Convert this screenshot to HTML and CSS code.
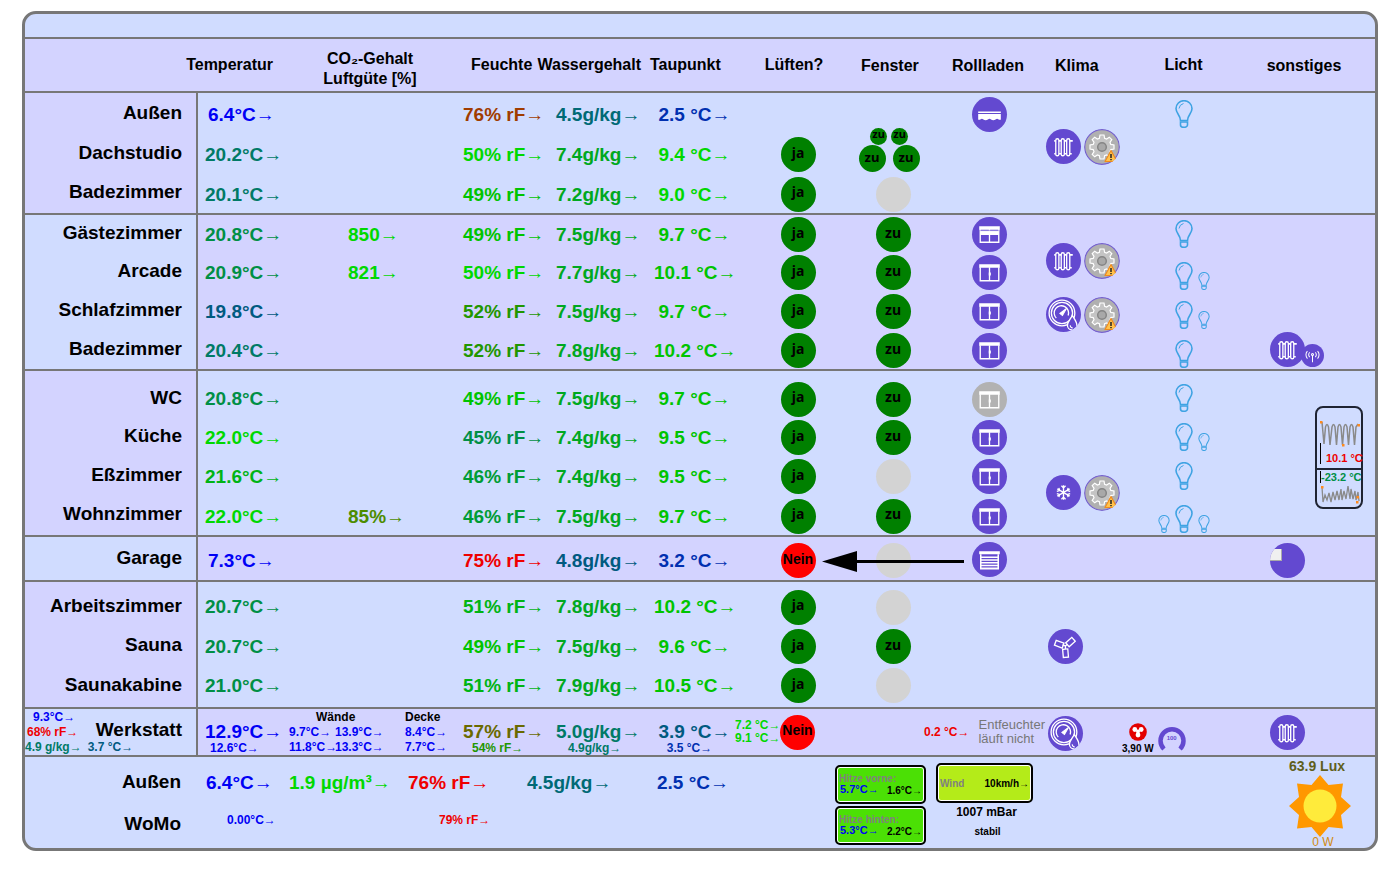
FILE: index.html
```html
<!DOCTYPE html>
<html lang="de">
<head>
<meta charset="utf-8">
<meta name="viewport" content="width=device-width, initial-scale=1">
<title>Raumklima</title>
<link rel="stylesheet" href="styles.css">
</head>
<body>
<svg class="defs" aria-hidden="true">
  <symbol id="bulb" viewBox="0 0 18 28">
    <g fill="none" stroke="#3fa3e3" stroke-width="1.600">
      <path d="M5.500 20.500C5.500 15 1 13.500 1 8.500a8 7.800 0 0 1 16 0c0 5-4.500 6.500-4.500 12z"/>
      <path d="M5.500 22h7v3a3.500 2.300 0 0 1-7 0z"/>
      <path d="M4 8.500q.5-4 4.500-5" stroke-width="1"/>
    </g>
  </symbol>
  <symbol id="window" viewBox="0 0 34 34">
    <path d="M7 9h20v3.500H7z" fill="#fff"/>
    <path d="M8 12v13h18V12M17 12v13" fill="none" stroke="#fff" stroke-width="1.300"/>
    <path d="M17.300 17v3" stroke="#fff" stroke-width="2"/>
  </symbol>
  <symbol id="window-half" viewBox="0 0 34 34">
    <path d="M7 9h20v3.500H7zM8 13.500h18v4H8z" fill="#fff"/>
    <path d="M8 12v12.500h18V12M17 12v12.500" fill="none" stroke="#fff" stroke-width="1.300"/>
    <path d="M8 13.200h18" stroke="#9b8de2" stroke-width=".8"/>
  </symbol>
  <symbol id="awning" viewBox="0 0 34 34">
    <path d="M6 14h22v1.500H6z" fill="#fff"/>
    <path d="M6 16.500h22v5.500c-2 .6-2.600-.9-3.600-.9s-1.800 1.400-3.700 1.400-2.600-1.400-3.700-1.400-1.800 1.400-3.700 1.400-2.700-1.400-3.700-1.400S8 22.600 6 22z" fill="#fff"/>
  </symbol>
  <symbol id="garage" viewBox="0 0 34 34">
    <path d="M7 9h20v3H7z" fill="#fff"/>
    <path d="M8.500 12v14h17V12M8 14.800h18M8 17.500h18M8 20.200h18M8 22.900h18M8 25.500h18" fill="none" stroke="#fff" stroke-width="1.500"/>
  </symbol>
  <symbol id="radiator" viewBox="0 0 34 34">
    <path d="M8 11.500h18M8 24h17" stroke="#fff" stroke-width="1.600"/>
    <g fill="#6349d0" stroke="#fff" stroke-width="1.300"><rect x="9.500" y="9.500" width="3" height="16.500" rx="1.500"/><rect x="14.800" y="9.500" width="3" height="16.500" rx="1.500"/><rect x="20.100" y="9.500" width="3" height="16.500" rx="1.500"/></g>
  </symbol>
  <symbol id="gear" viewBox="0 0 36 36">
    <circle cx="18" cy="18" r="17.300" fill="#b0b0b0" stroke="#7763cf" stroke-width="1.200"/>
    <path d="M16 6h4l.6 3.200 2 .8 2.700-1.800 2.500 2.500-1.800 2.700.8 2 3.200.6v4l-3.200.6-.8 2 1.800 2.700-2.500 2.500-2.700-1.800-2 .8-.6 3.200h-4l-.6-3.200-2-.8-2.700 1.800-2.500-2.500L10 22.600l-.8-2L6 20v-4l3.200-.6.8-2-1.800-2.700 2.500-2.500 2.700 1.800 2-.8z" fill="#c4c4c4" stroke="#fff" stroke-width="1.200"/>
    <circle cx="18" cy="18" r="4.300" fill="#a8a8a8" stroke="#858585" stroke-width="1.500"/>
    <path d="M27 21.500l6 11H21z" fill="#ffc34d" stroke="#f08b1d" stroke-width="1.200" stroke-linejoin="round"/>
    <path d="M27 25v4M27 30v1.300" stroke="#222" stroke-width="1.500"/>
  </symbol>
  <symbol id="humidity" viewBox="0 0 34 34">
    <g fill="none" stroke="#fff" stroke-width="1.300">
      <circle cx="15.500" cy="15.500" r="12.500"/><circle cx="15.500" cy="15.500" r="10.300"/>
      <path d="M10 20.500a7 7 0 1 1 11.500-2.500"/>
    </g>
    <path d="M13.500 16l6.500-5-4 7z" fill="#fff" stroke="#fff"/>
    <path d="M25.500 18c2.500 4 4.500 6.500 4.500 9.500a4.600 4.500 0 0 1-9.200 0c0-3 2.700-5.500 4.700-9.500z" fill="#6349d0" stroke="#fff" stroke-width="1.300"/>
    <path d="M23.500 27.500q0 2.500 2.500 2.700" fill="none" stroke="#fff"/>
  </symbol>
  <symbol id="snow" viewBox="0 0 34 34">
    <g stroke="#fff" stroke-width="1.300" fill="none">
      <path d="M17 10v14M11 13.500l12 7M23 13.500l-12 7"/>
      <path d="M15 10.500l2 2 2-2M15 23.500l2-2 2 2M10.500 16l2.700-.8-.7-2.700M23.500 18l-2.700.8.7 2.700M23.500 16l-2.700-.8.7-2.700M10.500 18l2.700.8-.7 2.700"/>
    </g>
  </symbol>
  <symbol id="fan" viewBox="0 0 34 34">
    <g fill="none" stroke="#fff" stroke-width="1.300">
      <rect x="14.500" y="19.500" width="5" height="8" transform="rotate(-5 17 23)"/>
      <rect x="14.500" y="19.500" width="5" height="8" transform="rotate(110 17 17)"/>
      <rect x="14.500" y="19.500" width="5" height="8" transform="rotate(-132 17 17)"/>
      <path d="M17 16.500v3M14 15.500l3 1 2-2"/>
    </g>
  </symbol>
  <symbol id="antenna" viewBox="0 0 34 34">
    <g fill="none" stroke="#fff" stroke-width="1.500">
      <path d="M17 16v11M13 12.500a4.500 4.500 0 0 0 0 7M21 12.500a4.500 4.500 0 0 1 0 7M9.500 10.500a8 8 0 0 0 0 11M24.500 10.500a8 8 0 0 1 0 11"/><circle cx="17" cy="15.500" r="1.500"/>
    </g>
  </symbol>
</svg>

<main class="panel">
  <div class="strip"></div>
  <table class="rooms">
    <colgroup>
      <col class="w-name"><col class="w-temp"><col class="w-air"><col class="w-hum"><col class="w-water"><col class="w-dew">
      <col class="w-vent"><col class="w-win"><col class="w-blind"><col class="w-clima"><col class="w-light"><col class="w-misc">
    </colgroup>
    <thead>
      <tr>
        <td></td>
        <th class="h-temp" scope="col">Temperatur</th>
        <th class="h-air" scope="col">CO₂-Gehalt<br>Luftgüte [%]</th>
        <th class="h-hum" scope="col">Feuchte</th>
        <th scope="col" class="h-water">Wassergehalt</th>
        <th scope="col" class="h-dew">Taupunkt</th>
        <th scope="col" class="h-vent">Lüften?</th>
        <th scope="col" class="low h-win">Fenster</th>
        <th scope="col" class="low h-blind">Rollladen</th>
        <th scope="col" class="low h-clima">Klima</th>
        <th scope="col">Licht</th>
        <th scope="col" class="low h-misc">sonstiges</th>
      </tr>
    </thead>

    <tbody class="zone sky g1">
      <tr class="first">
        <th scope="row">Außen</th>
        <td class="temp short blue">6.4°C<i>→</i></td><td></td>
        <td class="brown">76% rF<i>→</i></td><td class="water petrol">4.5g/kg<i>→</i></td><td class="dew navy">2.5 °C<i>→</i></td>
        <td></td><td></td>
        <td class="blind"><button class="ico" aria-label="Markise"><svg><use href="#awning"/></svg></button></td>
        <td class="clima" rowspan="3"><div class="stack">
          <div class="pair"><button class="ico" aria-label="Heizung Dachstudio"><svg><use href="#radiator"/></svg></button><button class="ico gear" aria-label="Einstellungen Dachstudio"><svg><use href="#gear"/></svg></button></div>
        </div></td>
        <td class="light"><div class="bulbs"><button class="bulb" aria-label="Licht Außen"><svg><use href="#bulb"/></svg></button></div></td>
        <td></td>
      </tr>
      <tr>
        <th scope="row">Dachstudio</th>
        <td class="temp teal">20.2°C<i>→</i></td><td></td>
        <td class="lime">50% rF<i>→</i></td><td class="water leaf">7.4g/kg<i>→</i></td><td class="dew lime">9.4 °C<i>→</i></td>
        <td class="mid"><span class="dot ok">ja</span></td>
        <td class="mid"><div class="quad"><div><span class="dot ok tiny">zu</span><span class="dot ok tiny">zu</span></div><div><span class="dot ok small">zu</span><span class="dot ok small">zu</span></div></div></td>
        <td></td><td></td><td></td>
      </tr>
      <tr>
        <th scope="row">Badezimmer</th>
        <td class="temp teal">20.1°C<i>→</i></td><td></td>
        <td class="green">49% rF<i>→</i></td><td class="water leaf">7.2g/kg<i>→</i></td><td class="dew lime">9.0 °C<i>→</i></td>
        <td class="mid"><span class="dot ok">ja</span></td><td class="win"><span class="dot none"></span></td>
        <td></td><td></td><td></td>
      </tr>
    </tbody>

    <tbody class="zone lilac g2">
      <tr class="first">
        <th scope="row">Gästezimmer</th>
        <td class="temp sea">20.8°C<i>→</i></td><td class="air lime">850<i>→</i></td>
        <td class="green">49% rF<i>→</i></td><td class="water leaf">7.5g/kg<i>→</i></td><td class="dew green">9.7 °C<i>→</i></td>
        <td class="mid"><span class="dot ok">ja</span></td><td class="win"><span class="dot ok">zu</span></td>
        <td class="blind"><button class="ico" aria-label="Rollladen Gästezimmer"><svg><use href="#window-half"/></svg></button></td>
        <td class="clima" rowspan="4"><div class="stack">
          <div class="pair"><button class="ico" aria-label="Heizung Arcade"><svg><use href="#radiator"/></svg></button><button class="ico gear" aria-label="Einstellungen Arcade"><svg><use href="#gear"/></svg></button></div>
          <div class="pair"><button class="ico" aria-label="Klima Schlafzimmer"><svg><use href="#humidity"/></svg></button><button class="ico gear" aria-label="Einstellungen Schlafzimmer"><svg><use href="#gear"/></svg></button></div>
        </div></td>
        <td class="light"><div class="bulbs"><button class="bulb" aria-label="Licht Gästezimmer"><svg><use href="#bulb"/></svg></button></div></td>
        <td></td>
      </tr>
      <tr>
        <th scope="row">Arcade</th>
        <td class="temp sea">20.9°C<i>→</i></td><td class="air lime">821<i>→</i></td>
        <td class="lime">50% rF<i>→</i></td><td class="water leaf">7.7g/kg<i>→</i></td><td class="dew green">10.1 °C<i>→</i></td>
        <td class="mid"><span class="dot ok">ja</span></td><td class="win"><span class="dot ok">zu</span></td>
        <td class="blind"><button class="ico" aria-label="Rollladen Arcade"><svg><use href="#window"/></svg></button></td>
        <td class="light drop"><div class="bulbs"><button class="bulb" aria-label="Licht Arcade"><svg><use href="#bulb"/></svg></button><button class="bulb mini right" aria-label="Nebenlicht Arcade"><svg><use href="#bulb"/></svg></button></div></td>
        <td></td>
      </tr>
      <tr>
        <th scope="row">Schlafzimmer</th>
        <td class="temp steel">19.8°C<i>→</i></td><td></td>
        <td class="moss">52% rF<i>→</i></td><td class="water leaf">7.5g/kg<i>→</i></td><td class="dew green">9.7 °C<i>→</i></td>
        <td class="mid"><span class="dot ok">ja</span></td><td class="win"><span class="dot ok">zu</span></td>
        <td class="blind"><button class="ico" aria-label="Rollladen Schlafzimmer"><svg><use href="#window"/></svg></button></td>
        <td class="light drop"><div class="bulbs"><button class="bulb" aria-label="Licht Schlafzimmer"><svg><use href="#bulb"/></svg></button><button class="bulb mini right" aria-label="Nebenlicht Schlafzimmer"><svg><use href="#bulb"/></svg></button></div></td>
        <td></td>
      </tr>
      <tr>
        <th scope="row">Badezimmer</th>
        <td class="temp teal">20.4°C<i>→</i></td><td></td>
        <td class="moss">52% rF<i>→</i></td><td class="water leaf">7.8g/kg<i>→</i></td><td class="dew green">10.2 °C<i>→</i></td>
        <td class="mid"><span class="dot ok">ja</span></td><td class="win"><span class="dot ok">zu</span></td>
        <td class="blind"><button class="ico" aria-label="Rollladen Badezimmer"><svg><use href="#window"/></svg></button></td>
        <td class="light drop"><div class="bulbs"><button class="bulb" aria-label="Licht Badezimmer"><svg><use href="#bulb"/></svg></button></div></td>
        <td class="misc"><div class="linked"><button class="ico" aria-label="Handtuchheizung"><svg><use href="#radiator"/></svg></button><button class="ico sub" aria-label="Funk"><svg><use href="#antenna"/></svg></button></div></td>
      </tr>
    </tbody>

    <tbody class="zone sky g3">
      <tr class="first">
        <th scope="row">WC</th>
        <td class="temp sea">20.8°C<i>→</i></td><td></td>
        <td class="green">49% rF<i>→</i></td><td class="water leaf">7.5g/kg<i>→</i></td><td class="dew green">9.7 °C<i>→</i></td>
        <td class="mid"><span class="dot ok">ja</span></td><td class="win"><span class="dot ok">zu</span></td>
        <td class="blind"><button class="ico off" aria-label="Rollladen WC"><svg><use href="#window"/></svg></button></td>
        <td class="clima" rowspan="4"><div class="stack">
          <div class="pair"><button class="ico" aria-label="Kühlung Wohnzimmer"><svg><use href="#snow"/></svg></button><button class="ico gear" aria-label="Einstellungen Wohnzimmer"><svg><use href="#gear"/></svg></button></div>
        </div></td>
        <td class="light"><div class="bulbs"><button class="bulb" aria-label="Licht WC"><svg><use href="#bulb"/></svg></button></div></td>
        <td class="history" rowspan="4">
          <div class="fridge">
            <div class="half red">
              <svg class="spark" viewBox="0 0 40 26"><path d="M2 1l2 22L5.500 6q1.500-5 3 0l1.500 18L12 6q1.500-5 3 0l1.500 18L18 6q1.500-5 3 0l1.500 18L24 6q1.500-5 3 0l1.500 18L30 6q1.500-5 3 0l1.500 18L36 6l2-3" fill="none" stroke="#8a8a8a" stroke-width="1.500"/><path d="M0 0h2.500v2.500H0zM22 23h2.500v2.500H22zM37.500 3H40v2.500h-2.500z" fill="#ff8a1c"/></svg>
              <span class="reading">10.1 °C</span>
            </div>
            <div class="half low-half sea">
              <span class="reading">-23.2 °C</span>
              <svg class="spark" viewBox="0 0 40 18"><path d="M2 1l1 15 2-7 2 5 2-7 2 9 2-10 2 8 2-9 2 9 2-11 1 11 2-9 2 8 2-13 2 13 1-10 2 10 2-8 1 9 2-8 1 9" fill="none" stroke="#8a8a8a" stroke-width="1.300"/><path d="M1 0h2.500v2.500H1zM36.500 10H39v2.500h-2.500zM36 15h2.500v2.500H36z" fill="#ff8a1c"/></svg>
            </div>
          </div>
        </td>
      </tr>
      <tr>
        <th scope="row">Küche</th>
        <td class="temp lime">22.0°C<i>→</i></td><td></td>
        <td class="sea">45% rF<i>→</i></td><td class="water leaf">7.4g/kg<i>→</i></td><td class="dew green">9.5 °C<i>→</i></td>
        <td class="mid"><span class="dot ok">ja</span></td><td class="win"><span class="dot ok">zu</span></td>
        <td class="blind"><button class="ico" aria-label="Rollladen Küche"><svg><use href="#window"/></svg></button></td>
        <td class="light"><div class="bulbs"><button class="bulb" aria-label="Licht Küche"><svg><use href="#bulb"/></svg></button><button class="bulb mini right" aria-label="Nebenlicht Küche"><svg><use href="#bulb"/></svg></button></div></td>
      </tr>
      <tr>
        <th scope="row">Eßzimmer</th>
        <td class="temp fern">21.6°C<i>→</i></td><td></td>
        <td class="jade">46% rF<i>→</i></td><td class="water leaf">7.4g/kg<i>→</i></td><td class="dew green">9.5 °C<i>→</i></td>
        <td class="mid"><span class="dot ok">ja</span></td><td class="win"><span class="dot none"></span></td>
        <td class="blind"><button class="ico" aria-label="Rollladen Eßzimmer"><svg><use href="#window"/></svg></button></td>
        <td class="light"><div class="bulbs"><button class="bulb" aria-label="Licht Eßzimmer"><svg><use href="#bulb"/></svg></button></div></td>
      </tr>
      <tr>
        <th scope="row">Wohnzimmer</th>
        <td class="temp lime">22.0°C<i>→</i></td><td class="air fresh">85%<i>→</i></td>
        <td class="jade">46% rF<i>→</i></td><td class="water leaf">7.5g/kg<i>→</i></td><td class="dew green">9.7 °C<i>→</i></td>
        <td class="mid"><span class="dot ok">ja</span></td><td class="win"><span class="dot ok">zu</span></td>
        <td class="blind"><button class="ico" aria-label="Rollladen Wohnzimmer"><svg><use href="#window"/></svg></button></td>
        <td class="light drop"><div class="bulbs"><button class="bulb mini left" aria-label="Licht links"><svg><use href="#bulb"/></svg></button><button class="bulb" aria-label="Licht Wohnzimmer"><svg><use href="#bulb"/></svg></button><button class="bulb mini right" aria-label="Licht rechts"><svg><use href="#bulb"/></svg></button></div></td>
      </tr>
    </tbody>

    <tbody class="zone lilac g4">
      <tr class="first">
        <th scope="row">Garage</th>
        <td class="temp short blue">7.3°C<i>→</i></td><td></td>
        <td class="red">75% rF<i>→</i></td><td class="water steel">4.8g/kg<i>→</i></td><td class="dew navy">3.2 °C<i>→</i></td>
        <td class="mid"><span class="dot bad">Nein</span></td>
        <td class="win linkcell"><span class="dot none"></span><svg class="arrow" viewBox="0 0 142 24"><path d="M30 12.500h112" stroke="#000" stroke-width="3"/><path d="M0 12.500L35 2v21z"/></svg></td>
        <td class="blind"><button class="ico" aria-label="Garagentor"><svg><use href="#garage"/></svg></button></td>
        <td></td><td></td>
        <td class="misc"><button class="ico tile" aria-label="Garage Anzeige"><span></span></button></td>
      </tr>
    </tbody>

    <tbody class="zone sky g5">
      <tr class="first">
        <th scope="row">Arbeitszimmer</th>
        <td class="temp sea">20.7°C<i>→</i></td><td></td>
        <td class="fern">51% rF<i>→</i></td><td class="water leaf">7.8g/kg<i>→</i></td><td class="dew green">10.2 °C<i>→</i></td>
        <td class="mid"><span class="dot ok">ja</span></td><td class="win"><span class="dot none"></span></td>
        <td></td><td></td><td></td><td></td>
      </tr>
      <tr>
        <th scope="row">Sauna</th>
        <td class="temp sea">20.7°C<i>→</i></td><td></td>
        <td class="green">49% rF<i>→</i></td><td class="water leaf">7.5g/kg<i>→</i></td><td class="dew green">9.6 °C<i>→</i></td>
        <td class="mid"><span class="dot ok">ja</span></td><td class="win"><span class="dot ok">zu</span></td>
        <td></td>
        <td class="clima solo"><button class="ico" aria-label="Lüfter Sauna"><svg><use href="#fan"/></svg></button></td>
        <td></td><td></td>
      </tr>
      <tr>
        <th scope="row">Saunakabine</th>
        <td class="temp sea">21.0°C<i>→</i></td><td></td>
        <td class="fern">51% rF<i>→</i></td><td class="water leaf">7.9g/kg<i>→</i></td><td class="dew green">10.5 °C<i>→</i></td>
        <td class="mid"><span class="dot ok">ja</span></td><td class="win"><span class="dot none"></span></td>
        <td></td><td></td><td></td><td></td>
      </tr>
    </tbody>

    <tbody class="zone lilac g6">
      <tr class="first">
        <th scope="row"><div class="workshop">
          <div class="side"><span class="blue in8">9.3°C<i>→</i></span><span class="red in2">68% rF<i>→</i></span><span class="row"><span class="teal">4.9 g/kg<i>→</i></span><span class="steel">3.7 °C<i>→</i></span></span></div>
          <span class="name">Werkstatt</span>
        </div></th>
        <td class="temp blue"><div class="double"><span>12.9°C<i>→</i></span><small>12.6°C<i>→</i></small></div></td>
        <td class="blue"><div class="walls">
          <b class="walls-head">Wände</b><b>Decke</b>
          <span>9.7°C<i>→</i></span><span>13.9°C<i>→</i></span><span>8.4°C<i>→</i></span>
          <span>11.8°C<i>→</i></span><span>13.3°C<i>→</i></span><span>7.7°C<i>→</i></span>
        </div></td>
        <td class="olive"><div class="double"><span>57% rF<i>→</i></span><small class="moss">54% rF<i>→</i></small></div></td>
        <td class="water teal"><div class="double"><span>5.0g/kg<i>→</i></span><small>4.9g/kg<i>→</i></small></div></td>
        <td class="dew steel"><div class="double"><span>3.9 °C<i>→</i></span><small class="navy">3.5 °C<i>→</i></small></div></td>
        <td><div class="vent-info"><div class="tiny-list lime"><span>7.2 °C<i>→</i></span><span>9.1 °C<i>→</i></span></div><span class="dot bad">Nein</span></div></td>
        <td></td>
        <td><div class="dry"><span class="red">0.2 °C<i>→</i></span><p>Entfeuchter<br>läuft nicht</p></div></td>
        <td class="clima solo"><button class="ico" aria-label="Entfeuchter"><svg><use href="#humidity"/></svg></button></td>
        <td><div class="power"><div class="watt"><svg viewBox="0 0 18 18"><circle cx="9" cy="9" r="8.800" fill="#e30000"/><g fill="#fff"><circle cx="5.800" cy="6.500" r="2.400"/><circle cx="12.200" cy="6.500" r="2.400"/><circle cx="9" cy="12" r="2.400"/><circle cx="9" cy="8.500" r="2"/></g></svg><span>3,90 W</span></div>
          <div class="gauge"><svg viewBox="0 0 28 28"><path d="M6 25A11.500 11.500 0 1 1 22 25" fill="none" stroke="#6349d0" stroke-width="4.500"/></svg><span>100</span></div></div></td>
        <td class="misc"><button class="ico" aria-label="Heizung Werkstatt"><svg><use href="#radiator"/></svg></button></td>
      </tr>
    </tbody>
  </table>

  <section class="outside">
    <table class="weather">
      <tr><th scope="row">Außen</th><td class="w1 blue">6.4°C<i>→</i></td><td class="w2 lime">1.9 µg/m³<i>→</i></td><td class="w2 red">76% rF<i>→</i></td><td class="w3 petrol">4.5g/kg<i>→</i></td><td class="w4 navy">2.5 °C<i>→</i></td></tr>
      <tr class="womo"><th scope="row">WoMo</th><td class="blue in22">0.00°C<i>→</i></td><td></td><td class="red in31">79% rF<i>→</i></td><td></td><td></td></tr>
    </table>
    <div class="cards">
      <div class="card heat"><span class="cap">Hitze vorne:</span><div class="vals"><span class="blue">5.7°C<i>→</i></span><span class="peak">1.6°C<i>→</i></span></div></div>
      <div class="card heat"><span class="cap">Hitze hinten:</span><div class="vals"><span class="blue">5.3°C<i>→</i></span><span class="peak">2.2°C<i>→</i></span></div></div>
    </div>
    <div class="air-state">
      <div class="card wind"><span class="cap">Wind</span><span>10km/h<i>→</i></span></div>
      <span class="pressure">1007 mBar</span>
      <span class="trend">stabil</span>
    </div>
    <div class="sun">
      <span class="lux">63.9 Lux</span>
      <svg viewBox="0 0 62 62"><path d="M31 0l8.500 10L54 8.500 52 22l10 9-10 9 2 13.500L39.500 52 31 62l-8.500-10L8 53.500 10 40 0 31l10-9L8 8.500 22.500 10z" fill="#ff9800"/><circle cx="31" cy="31" r="16.500" fill="#ffeb3b"/></svg>
      <span class="solar">0 W</span>
    </div>
  </section>
</main>
</body>
</html>
```

FILE: styles.css
```css
* { box-sizing: border-box; }

body {
  margin: 0;
  background: #fff;
  color: #000;
  font-family: "Liberation Sans", Arial, sans-serif;
}

.defs { display: none; }

.panel {
  margin: 11px 22px 16px;
  border: 3px solid #777;
  border-radius: 14px;
  background: #d0dcff;
  overflow: hidden;
}

.strip { height: 23px; }

table { border-spacing: 0; }
th, td { padding: 0; text-align: left; }
small { font-size: inherit; }

/* Trend arrows use the thin serif glyph */
i { font-family: "Liberation Serif", serif; font-style: normal; font-weight: 400; line-height: 1; }

/* Room table */
.rooms {
  width: 100%;
  min-width: 1350px;
  table-layout: fixed;
  font-size: 19px;
  font-weight: 700;
  line-height: 20px;
  white-space: nowrap;
}
.w-name { width: 173px; }
.w-temp { width: 92px; }
.w-air { width: 165px; }
.w-hum { width: 93px; }
.w-water { width: 98px; }
.w-dew { width: 89px; }
.w-vent { width: 126px; }
.w-win { width: 64px; }
.w-blind { width: 120px; }
.w-clima { width: 77px; }
.w-light { width: 123px; }
.w-misc { width: 130px; }

thead tr { height: 54px; background: #d3d3ff; }
thead th, thead td { border-top: 2px solid #777; }
thead th { font-size: 16px; text-align: center; }
thead .h-temp { text-align: right; padding-right: 17px; direction: rtl; }
thead .h-air { padding: 8px 5px 0 0; }
thead .h-hum { text-align: left; padding-left: 16px; }
thead .h-water { text-align: right; padding-right: 5px; direction: rtl; }
thead .h-dew { text-align: left; padding-left: 4px; }
thead .h-vent { padding-right: 8px; }
thead .low { padding-top: 2px; }
thead .h-win { padding-right: 12px; }
thead .h-blind { padding-left: 6px; }
thead .h-clima { text-align: left; padding-left: 10px; }
thead .h-misc { padding-right: 12px; }

.zone.sky { background: #d0dcff; }
.zone.lilac { background: #d3d3ff; }
.zone.sky th { background: #d3d3ff; }
.zone.lilac th { background: #d0dcff; }
.zone tr { height: 39px; }
.zone th {
  padding-right: 14px;
  padding-bottom: 2px;
  border-right: 2px solid #777;
  text-align: right;
}
.zone td { padding-top: 3px; padding-left: 8px; }
.zone .first > * { border-top: 2px solid #777; }
.zone .mid, .zone .win { padding: 2px 0 0; text-align: center; }

.g1 .first { height: 43px; }
.g1 tr:last-child { height: 40px; }
.g3 .first { height: 48px; }
.g3 .first > * { padding-top: 9px; }
.g3 tr:last-child { height: 40px; }
.g4 .first { height: 45px; }
.g4 .first > td { padding-top: 4px; }
.g5 .first { height: 46px; }
.g5 .first > * { padding-top: 6px; }
.g5 tr:last-child { height: 42px; }
.g5 tr:last-child > * { padding-bottom: 3px; }
.g6 .first { height: 48px; }

.zone .temp { padding-left: 7px; }
.zone .short { padding-left: 10px; }
.zone .air { padding-left: 58px; }
.zone .dew { padding-left: 8px; padding-right: 0; text-align: center; }
.zone td.blind { padding-left: 8px; padding-top: 2px; text-align: center; }
.g3 .first > td.blind { padding-top: 10px; }
.g3 .first > td.mid, .g3 .first > td.win { padding-top: 10px; }
.zone .light { padding: 0; }
.g3 .first > td.light { padding-top: 8px; }
.zone .drop { padding-top: 8px; }
.zone .misc { padding-left: 25px; padding-top: 0; }
.zone .clima { padding: 0; vertical-align: top; }
.zone .clima.solo { padding: 2px 0 0 3px; vertical-align: middle; }

/* Status dots and icon buttons */
.dot, .ico {
  display: flex;
  flex: none;
  align-items: center;
  justify-content: center;
  width: 35px;
  height: 35px;
  margin: 0 auto;
  border-radius: 50%;
}
.dot {
  padding-bottom: 4px;
  font: 700 14px/14px "Noto Sans", sans-serif;
}
.ok { background: #008000; }
.none { background: #d3d3d3; }
.bad { background: #f00; font-family: "Liberation Sans", sans-serif; }
.small { width: 27px; height: 27px; margin: 0; padding-bottom: 2px; font-size: 13px; }
.tiny { width: 17px; height: 17px; margin: 0; font-size: 11px; }
.quad { margin-top: -10px; padding-right: 8px; }
.quad > div { display: flex; justify-content: center; gap: 7px; }
.quad > div:first-child { gap: 4px; }

button { border: 0; padding: 0; background: none; cursor: pointer; font: inherit; }
.ico { background: #6349d0; overflow: hidden; }
.ico svg { width: 35px; height: 35px; }
.ico.off { background: #b2b2b2; }
.ico.gear { width: 36px; height: 36px; background: none; }
.ico.gear svg { width: 36px; height: 36px; }
.ico.sub { width: 23px; height: 23px; }
.ico.sub svg { width: 23px; height: 23px; }
.solo .ico, .misc .ico, .pair .ico { margin: 0; }
.ico.tile { justify-content: flex-start; align-items: flex-start; padding-top: 6px; }
.tile span {
  width: 12px;
  height: 12px;
  background: #f0f0f0;
  border-right: 1px solid #aaa;
  border-bottom: 1px solid #aaa;
}

.stack { display: flex; flex-direction: column; gap: 18px; padding-top: 36px; }
.g2 .stack { padding-top: 28px; }
.g3 .first > .clima { padding-top: 0; }
.g3 .stack { padding-top: 104px; }
.pair { display: flex; gap: 3px; padding-left: 1px; }
.linked { display: flex; align-items: flex-end; }
.linked .sub { margin-left: -4px; }

.bulbs {
  display: grid;
  grid-template-columns: 12px 18px 12px;
  gap: 5px;
  justify-content: center;
  align-items: end;
}
.bulb { grid-row: 1; grid-column: 2; display: block; }
.bulb svg { display: block; width: 18px; height: 28px; }
.bulb.left { grid-column: 1; }
.bulb.right { grid-column: 3; }
.bulb.mini svg { width: 12px; height: 18px; }

/* Freezer history */
.zone .first > .history { padding: 35px 12px 0 0; vertical-align: top; }
.fridge {
  width: 48px;
  margin-left: auto;
  border: 2px solid #1f2433;
  border-radius: 8px;
  font-size: 11px;
  line-height: 12px;
}
.half { height: 60px; padding: 13px 0 0 3px; display: flex; flex-direction: column; }
.low-half { height: 39px; padding-top: 1px; gap: 3px; border-top: 2px solid #1f2433; }
.spark { display: block; width: 40px; }
.reading { margin-top: -4px; padding: 9px 0 0 5px; border-left: 1px solid #000; }
.low-half .reading { margin: 0; padding: 0; }

/* Arrow lying over the window column */
.linkcell { position: relative; }
.arrow { position: absolute; left: -39px; top: 12px; width: 142px; height: 24px; }

/* Workshop row */
.g6 .first > th { padding: 0 14px 0 0; }
.g6 .first > td { padding-top: 0; vertical-align: middle; }
.workshop { display: flex; justify-content: space-between; }
.side { display: flex; flex-direction: column; width: 0; font-size: 12px; line-height: 15px; text-align: left; }
.side .row { display: flex; gap: 6px; }
.in8 { padding-left: 8px; }
.in2 { padding-left: 2px; }
.name { padding-top: 10px; }
.double { display: flex; flex-direction: column; padding-top: 12px; }
.double small { padding-left: 5px; font-size: 12px; line-height: 12px; }
.dew .double small { padding-left: 0; padding-right: 10px; }
.water .double small { padding-left: 12px; }
.olive .double small { padding-left: 9px; }
.walls {
  display: grid;
  grid-template-columns: 46px 70px 60px;
  margin-left: -9px;
  font-size: 12px;
  line-height: 15px;
}
.walls b { color: #000; }
.walls-head { grid-column: span 2; padding-left: 27px; }
.vent-info { display: flex; margin-left: -8px; align-items: center; }
.vent-info .dot { margin: 0; }
.tiny-list { display: flex; flex-direction: column; width: 45px; font-size: 12px; line-height: 13px; }
.dry { display: flex; align-items: center; gap: 9px; margin-left: -9px; font-size: 12px; }
.dry p { margin: 0; color: #777; font-size: 13px; font-weight: 400; line-height: 14px; }
.power { display: flex; align-items: center; gap: 4px; margin-left: -8px; }
.watt { display: flex; flex-direction: column; align-items: center; gap: 2px; padding-top: 12px; font-size: 10px; line-height: 11px; }
.watt svg { width: 18px; height: 18px; }
.gauge { display: grid; place-items: center; padding-top: 12px; color: #6349d0; font-size: 6px; }
.gauge > * { grid-area: 1 / 1; }
.gauge svg { width: 28px; height: 28px; }

/* Outdoor section */
.outside { display: flex; align-items: flex-start; border-top: 2px solid #777; height: 93px; font-weight: 700; white-space: nowrap; }
.weather { flex: none; width: 810px; table-layout: fixed; font-size: 19px; line-height: 20px; }
.weather th { width: 181px; padding-right: 25px; padding-bottom: 1px; text-align: right; }
.weather td { padding-top: 2px; }
.weather tr { height: 50px; }
.weather .womo { height: 34px; font-size: 12px; }
.womo th { font-size: 19px; padding: 0 25px 0 0; }
.womo td { padding-top: 0; padding-bottom: 8px; }
.w1 { width: 83px; }
.w2 { width: 119px; }
.w3 { width: 130px; }
.w4 { width: 178px; }
.womo .in22 { padding-left: 21px; }
.womo .in31 { padding-left: 31px; }

.cards { display: flex; flex-direction: column; gap: 2px; padding-top: 8px; }
.card {
  border: 2px solid #000;
  border-radius: 5px;
  box-shadow: inset 0 0 0 1px #fff;
  font-size: 10px;
  line-height: 11px;
}
.cap { color: #808080; }
.heat { width: 91px; height: 39px; padding: 6px 2px 0; background: #4be005; display: flex; flex-direction: column; }
.vals { display: flex; justify-content: space-between; padding-left: 1px; }
.peak { padding-top: 1px; }
.vals .blue { font-size: 11px; }
.air-state { display: flex; flex-direction: column; align-items: center; width: 97px; margin-left: 10px; padding-top: 6px; }
.wind {
  width: 97px;
  height: 40px;
  padding: 0 2px;
  background: #b4eb19;
  display: flex;
  align-items: center;
  justify-content: space-between;
}
.pressure { padding: 1px 0 0 4px; font-size: 12px; line-height: 16px; }
.trend { padding: 6px 0 0 6px; font-size: 10px; line-height: 12px; }
.sun { display: flex; flex-direction: column; align-items: center; margin-left: auto; padding-right: 24px; }
.sun svg { width: 62px; height: 62px; }
.lux { padding: 1px 6px 0 0; color: #5f5f1c; font-size: 14px; line-height: 17px; }
.solar { padding-left: 6px; margin-top: -1px; color: #d08a10; font-size: 12px; font-weight: 400; line-height: 12px; }

/* Value colours */
.blue { color: #0000f5; }
.navy { color: #0030b0; }
.steel { color: #005a80; }
.petrol { color: #006a75; }
.teal { color: #007a66; }
.sea { color: #008f45; }
.jade { color: #009c35; }
.leaf { color: #00a820; }
.fern { color: #00b414; }
.green { color: #00c400; }
.lime { color: #00d800; }
.moss { color: #229600; }
.fresh { color: #4d8c00; }
.olive { color: #6a6a00; }
.brown { color: #a03c00; }
.red { color: #ef0000; }
```
